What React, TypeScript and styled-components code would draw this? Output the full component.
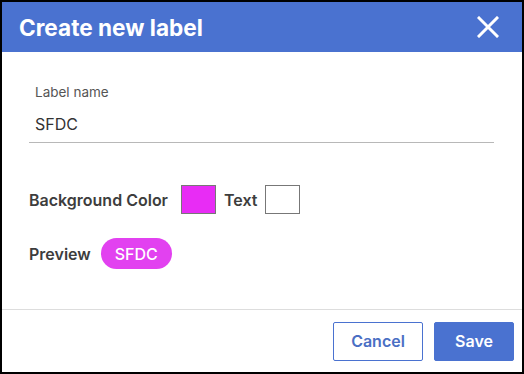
import styled, { createGlobalStyle } from "styled-components";

const GlobalStyle = createGlobalStyle`
  html, body {
    margin: 0;
    padding: 0;
    background: #ffffff;
  }
  * {
    box-sizing: border-box;
  }
`;

const Dialog = styled.div`
  width: 524px;
  height: 374px;
  border: 2px solid #000000;
  background: #ffffff;
  display: flex;
  flex-direction: column;
  font-family: Inter, "Liberation Sans", sans-serif;
`;

const Header = styled.div`
  height: 50px;
  background-color: #4a72d0;
  display: flex;
  align-items: center;
  justify-content: space-between;
  padding: 0 22px 0 17px;
`;

const Title = styled.h2`
  margin: 0;
  color: #ffffff;
  font-size: 22.6px;
  font-weight: 700;
  letter-spacing: 0;
`;

const CloseButton = styled.button`
  border: none;
  background: transparent;
  padding: 0;
  width: 24px;
  height: 24px;
  display: flex;
  align-items: center;
  justify-content: center;
  cursor: pointer;
`;

const Body = styled.div`
  flex: 1;
  padding: 32px 28px 0 27px;
  display: flex;
  flex-direction: column;
`;

const Field = styled.div`
  width: 465px;
  border-bottom: 1px solid #b8b8b8;
  padding: 0 6px 8px;
  display: flex;
  flex-direction: column;
  gap: 14px;
`;

const FieldLabel = styled.label`
  color: #555555;
  font-size: 13.5px;
  line-height: 16px;
`;

const FieldValue = styled.div`
  color: #333333;
  font-size: 16px;
  line-height: 20px;
`;

const Row = styled.div<{ $top: number }>`
  display: flex;
  align-items: center;
  gap: 8px;
  margin-top: ${(p) => p.$top}px;
`;

const RowLabel = styled.span<{ $gap?: number }>`
  color: #3d3d3d;
  font-size: 16px;
  font-weight: 600;
  margin-right: ${(p) => p.$gap ?? 0}px;
`;

const Swatch = styled.div<{ $color: string }>`
  width: 35px;
  height: 29px;
  background-color: ${(p) => p.$color};
  border: 1px solid #777777;
`;

const Pill = styled.span`
  background-color: #e241f0;
  color: #ffffff;
  font-size: 16px;
  font-weight: 500;
  height: 31px;
  padding: 0 14px;
  border-radius: 16px;
  display: inline-flex;
  align-items: center;
`;

const Footer = styled.div`
  height: 63px;
  border-top: 1px solid #dddddd;
  display: flex;
  align-items: center;
  justify-content: flex-end;
  gap: 11px;
  padding: 0 8px 0 0;
`;

const Button = styled.button<{ $primary?: boolean }>`
  height: 39px;
  padding: 0;
  width: ${(p) => (p.$primary ? 80 : 90)}px;
  border-radius: 2px;
  font-family: Inter, "Liberation Sans", sans-serif;
  font-size: 16px;
  font-weight: 600;
  cursor: pointer;
  border: 1px solid #4a72d0;
  background: ${(p) => (p.$primary ? "#4a72d0" : "#ffffff")};
  color: ${(p) => (p.$primary ? "#ffffff" : "#4a6fc4")};
`;

const App = () => {
  return (
    <>
      <GlobalStyle />
      <Dialog>
        <Header>
          <Title>Create new label</Title>
          <CloseButton aria-label="Close">
            <svg width="22" height="22" viewBox="0 0 22 22">
              <path
                d="M2 2 L20 20 M20 2 L2 20"
                stroke="#ffffff"
                strokeWidth="3"
                strokeLinecap="square"
              />
            </svg>
          </CloseButton>
        </Header>
        <Body>
          <Field>
            <FieldLabel>Label name</FieldLabel>
            <FieldValue>SFDC</FieldValue>
          </Field>
          <Row $top={42}>
            <RowLabel $gap={5}>Background Color</RowLabel>
            <Swatch $color="#e82cf5" />
            <RowLabel>Text</RowLabel>
            <Swatch $color="#ffffff" />
          </Row>
          <Row $top={24}>
            <RowLabel $gap={2}>Preview</RowLabel>
            <Pill>SFDC</Pill>
          </Row>
        </Body>
        <Footer>
          <Button>Cancel</Button>
          <Button $primary>Save</Button>
        </Footer>
      </Dialog>
    </>
  );
};

export default App;
